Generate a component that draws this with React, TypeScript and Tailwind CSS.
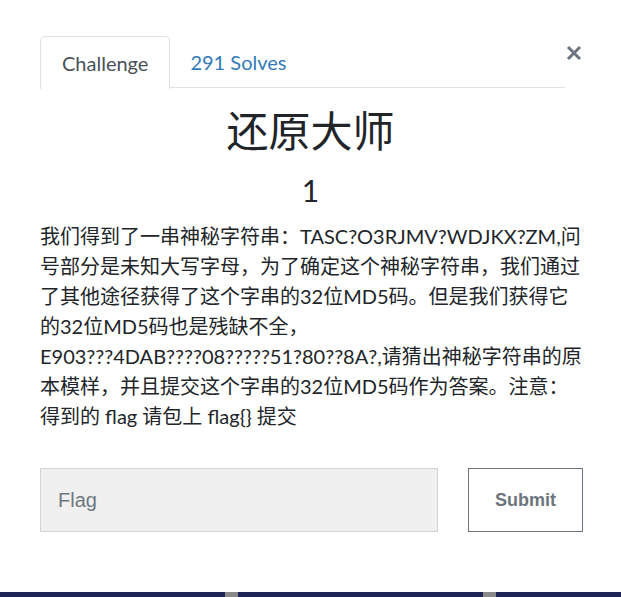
import React from "react";

const font = "font-['Lato','Noto_Sans_CJK_SC',sans-serif]";

const CloseIcon = () => (
  <svg width="16" height="16" viewBox="0 0 16 16" className="text-[#6c757d]">
    <path d="M2 2 L14 14 M14 2 L2 14" stroke="currentColor" strokeWidth="3" strokeLinecap="butt" />
  </svg>
);

const ChallengeModal = () => (
  <div className={`w-[621px] h-[597px] bg-white flex flex-col ${font} text-[#212529]`}>
    <div className="pl-[40px] pr-[38px] pt-[36px] flex-1">
      <div className="flex flex-row items-start">
        <div className="flex flex-row flex-1 border-b border-[#dee2e6] h-[52px]">
          <div className="h-[53px] px-[21px] flex items-center border border-b-0 border-[#dee2e6] rounded-t-[5px] bg-white text-[20px] text-[#495057] -mb-px">
            Challenge
          </div>
          <div className="h-[52px] px-[20px] flex items-center text-[20px] text-[#337ab7]">
            291 Solves
          </div>
        </div>
        <button className="w-[16px] ml-[1px] mr-[1px] mt-[9px] flex items-center justify-center">
          <CloseIcon />
        </button>
      </div>

      <h2 className="text-center text-[42px] leading-[48px] mt-[19px] pr-[2px]">还原大师</h2>
      <h3 className="text-center text-[30px] leading-[36px] mt-[17px] pr-[2px]">1</h3>

      <p className="w-[542px] mt-[13px] text-[20px] leading-[30px] text-[#212529]">
        我们得到了一串神秘字符串：TASC?O3RJMV?WDJKX?ZM,问号部分是未知大写字母，为了确定这个神秘字符串，我们通过了其他途径获得了这个字串的32位MD5码。但是我们获得它的32位MD5码也是残缺不全，
        <span className="whitespace-nowrap">E903???4DAB????08?????51?80??8A?,</span>
        请猜出神秘字符串的原本模样，并且提交这个字串的32位MD5码作为答案。注意：得到的 flag 请包上 {"flag{}"} 提交
      </p>

      <div className="flex flex-row mt-[37px] gap-[30px]">
        <input
          placeholder="Flag"
          className="w-[398px] shrink-0 h-[64px] bg-[#f0f0f0] border border-[#d3d6d9] px-[17px] text-[20px] font-['Liberation_Sans',Arial,sans-serif] placeholder:text-[#6f777e] outline-none"
        />
        <button className="w-[115px] shrink-0 h-[64px] border border-[#6c757d] bg-white text-[#6c757d] text-[18px] font-bold font-['Liberation_Sans',Arial,sans-serif]">
          Submit
        </button>
      </div>
    </div>
    <div className="h-[5px] bg-[#1f2456] flex flex-row">
      <div className="w-[225px]" />
      <div className="w-[13px] bg-[#8a8a8a]" />
      <div className="w-[245px]" />
      <div className="w-[13px] bg-[#8a8a8a]" />
    </div>
  </div>
);

export default function App() {
  return <ChallengeModal />;
}
